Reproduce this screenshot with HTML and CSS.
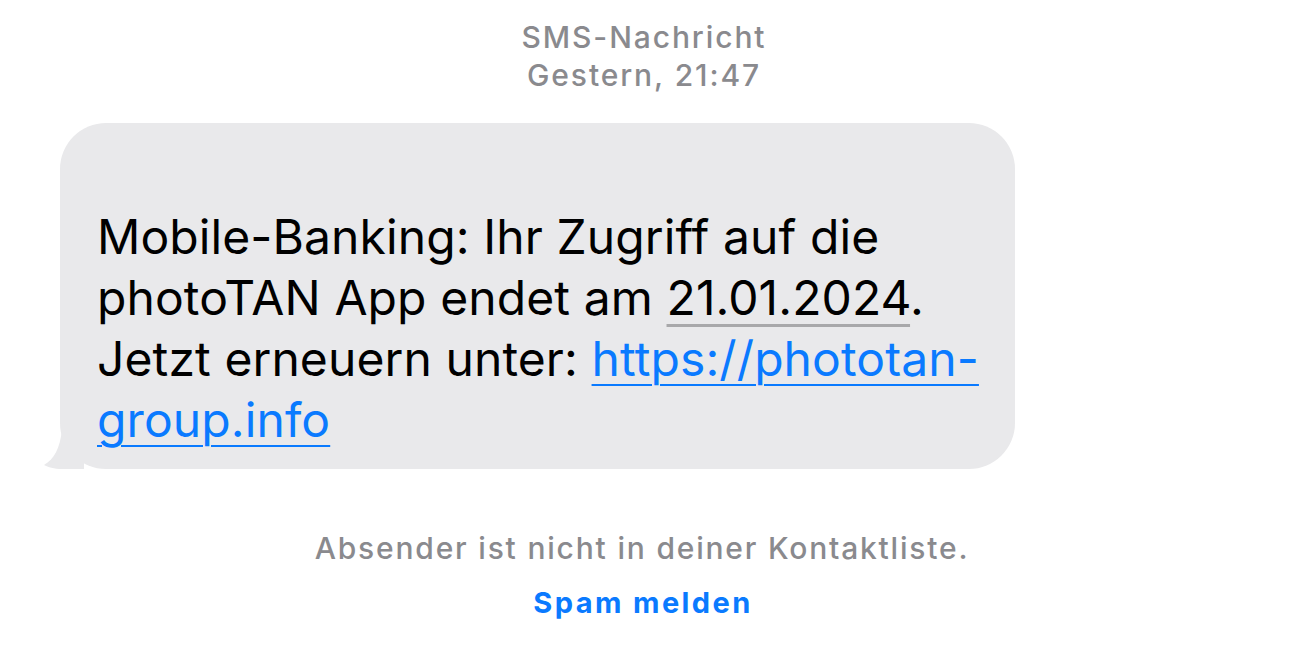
FILE: index.html
```html
<!DOCTYPE html>
<html lang="de">
<head>
<meta charset="utf-8">
<link rel="stylesheet" href="styles.css">
</head>
<body>
<div class="screen">
  <header class="meta">
    <div>SMS-Nachricht</div>
    <div>Gestern, 21:47</div>
  </header>
  <div class="row">
    <div class="bubble">
      <svg class="tail" width="40" height="40" viewBox="0 0 40 40"><path d="M40 0 L40 40 L18 40 C10 40 4 38 0 36 C10 30 16 20 18 0 Z" fill="#e9e9eb"/></svg>
      <p class="msg"><br>Mobile-Banking: Ihr Zugriff auf die<br>photoTAN App endet am <span class="date">21.01.2024</span>.<br>Jetzt erneuern unter: <a class="link" href="#">https://phototan-<br>group.info</a></p>
    </div>
  </div>
  <p class="notice">Absender ist nicht in deiner Kontaktliste.</p>
  <p class="spam">Spam melden</p>
</div>
</body>
</html>
```
FILE: styles.css
```css
html, body {
  margin: 0;
  padding: 0;
  background: #ffffff;
}
.screen {
  width: 1290px;
  height: 665px;
  font-family: "Inter", "Liberation Sans", sans-serif;
  overflow: hidden;
}
.meta {
  padding-top: 18px;
  text-align: center;
  color: #8a8a8e;
  font-size: 30px;
  line-height: 38px;
  font-weight: 500;
  letter-spacing: 1.9px;
  padding-right: 2px;
}
.row {
  padding-left: 60px;
  margin-top: 29px;
}
.bubble {
  position: relative;
  width: 955px;
  box-sizing: border-box;
  background: #e9e9eb;
  border-radius: 46px;
  padding: 22px 30px 19px 37px;
}
.tail {
  position: absolute;
  left: -16px;
  bottom: 0;
}
.msg {
  position: relative;
  margin: 0;
  font-size: 48px;
  line-height: 61px;
  color: #000;
  letter-spacing: 0.1px;
}
.date {
  text-decoration: underline;
  text-decoration-color: #a8a8aa;
  text-underline-offset: 9px;
  text-decoration-thickness: 3px;
}
.link {
  color: #0a7aff;
  text-decoration: underline;
  text-underline-offset: 8px;
  text-decoration-thickness: 2px;
}
.notice {
  margin: 62px 0 0;
  text-align: center;
  color: #8a8a8e;
  font-size: 30px;
  line-height: 34px;
  font-weight: 500;
  letter-spacing: 1.8px;
  padding-right: 6px;
}
.spam {
  margin: 21px 0 0;
  text-align: center;
  color: #0a7aff;
  font-size: 29px;
  line-height: 34px;
  font-weight: 700;
  letter-spacing: 2.4px;
  padding-right: 4px;
}
```
